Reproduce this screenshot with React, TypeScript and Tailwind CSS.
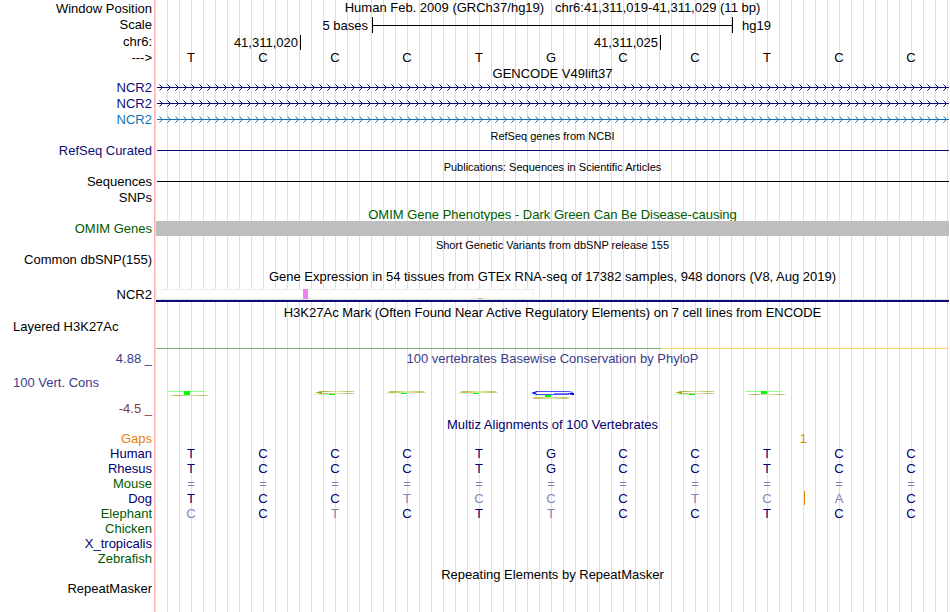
import type { ReactNode } from 'react'
import clsx from 'clsx'

const BASES = 'TCCCTGCCTCC'

// upper case = match with the reference genome, lower case = drawn faded
const SPECIES = [
  { name: 'Human', color: 'text-[#00006e]', seq: 'TCCCTGCCTCC' },
  { name: 'Rhesus', color: 'text-[#00006e]', seq: 'TCCCTGCCTCC' },
  { name: 'Mouse', color: 'text-[#005a00]', seq: '===========' },
  { name: 'Dog', color: 'text-[#00006e]', seq: 'TCCtccCtcaC', insertAt: 9 },
  { name: 'Elephant', color: 'text-[#005a00]', seq: 'cCtCTtCCTCC' },
  { name: 'Chicken', color: 'text-[#005a00]', seq: '' },
  { name: 'X_tropicalis', color: 'text-[#00006e]', seq: '' },
  { name: 'Zebrafish', color: 'text-[#005a00]', seq: '' },
]

const GENES = [
  { id: 'ncr2-a', text: 'text-[#0c0c78]', stroke: '#0c0c78' },
  { id: 'ncr2-b', text: 'text-[#0c0c78]', stroke: '#0c0c78' },
  { id: 'ncr2-c', text: 'text-[#1173b3]', stroke: '#1173b3' },
]

type RowProps = {
  label?: string
  color?: string
  height: string
  left?: boolean
  className?: string
  children?: ReactNode
}

function Row({ label, color = 'text-black', height, left, className, children }: RowProps) {
  return (
    <div className={clsx('flex', height)}>
      <div
        className={clsx(
          'flex w-[155px] shrink-0 items-center border-r border-[#ffb4b4] bg-white leading-4 whitespace-nowrap',
          left ? 'justify-start pl-[13px]' : 'justify-end pr-[2px]',
          color,
        )}
      >
        {label}
      </div>
      <div className={clsx('flex min-w-0 flex-1 items-center pl-px', className)}>{children}</div>
    </div>
  )
}

type TitleProps = { small?: boolean; color?: string; children: ReactNode }

function Title({ small, color = 'text-black', children }: TitleProps) {
  return (
    <h2 className={clsx('w-full text-center whitespace-pre', small ? 'text-[11px] leading-4' : 'text-[13px] leading-4', color)}>
      {children}
    </h2>
  )
}

function Sequence({ seq, insertAt, plain }: { seq: string; insertAt?: number; plain?: boolean }) {
  return (
    <div className="grid h-full w-full grid-cols-11 items-center pr-[2px] text-center">
      {seq.split('').map((base, i) => (
        <span
          key={i}
          className={clsx(
            'relative',
            plain ? 'text-black' : base === base.toUpperCase() && base !== '=' ? 'text-[#00006e]' : 'text-[#8484b4]',
          )}
        >
          {i === insertAt && <i className="absolute top-0 -left-1 h-3.5 w-1.5 border-r border-[#e6820a]" />}
          {base.toUpperCase()}
        </span>
      ))}
    </div>
  )
}

function Intron({ id, stroke }: { id: string; stroke: string }) {
  return (
    <svg className="ml-px h-[15px] w-full" aria-hidden="true">
      <defs>
        <pattern id={id} width="8" height="15" patternUnits="userSpaceOnUse">
          <path d="M2.5 4.5 L5.5 7.5 L2.5 10.5" fill="none" stroke={stroke} strokeWidth="1" />
        </pattern>
      </defs>
      <rect width="100%" height="15" fill={`url(#${id})`} />
      <rect y="7" width="100%" height="1" fill={stroke} />
    </svg>
  )
}

// sequence logo squashed by near-zero conservation scores
function FlatT({ x, depth }: { x: number; depth: number }) {
  return (
    <g transform={`translate(${x} 0)`}>
      <rect x="0" y="3" width="37" height="1" fill="#8cff8c" />
      <rect x="3" y={3 + depth} width="38" height="1" fill="url(#olive)" />
      <rect x="16" y="3" width="6" height={depth} fill="#00ff00" />
    </g>
  )
}

function FlatC({ x, open }: { x: number; open?: boolean }) {
  return (
    <g transform={`translate(${x} 0)`}>
      {open ? (
        <>
          <rect x="-2" y="6" width="18" height="1" fill="#c8ffc8" />
          <rect x="4" y="3" width="36" height="1" fill="url(#olive)" />
          <rect x="4" y="5" width="36" height="1" fill="url(#olive)" />
          <path d="M0 4.5 L7 3 L7 6 Z" fill="#a0a000" />
          <rect x="14" y="6" width="6" height="1" fill="#00ff00" />
        </>
      ) : (
        <>
          <rect x="-2" y="5" width="18" height="1" fill="#dcffdc" />
          <path d="M0 4 L4 3 H36 L40 4.5 L36 5 H2 Z" fill="url(#pale)" />
          <rect x="14" y="5" width="6" height="1" fill="#00ff00" />
        </>
      )}
    </g>
  )
}

function FlatG({ x }: { x: number }) {
  return (
    <g transform={`translate(${x} 0)`}>
      <path d="M5 3.5 H38 L42 4.5" fill="none" stroke="#5050ff" />
      <path d="M5 6.5 H38" fill="none" stroke="#5050ff" />
      <path d="M0 5 L6 3 V4 L4 5 L6 6 V7 Z" fill="#0000ff" />
      <path d="M23 5.5 H42" fill="none" stroke="#7878ff" />
      <path d="M37 5 H43 V7 H40 Z" fill="#0000ff" />
      <rect x="1" y="7" width="14" height="1" fill="#c8ffc8" />
      <rect x="14" y="7" width="6" height="2" fill="#00ff00" />
      <path d="M0 10 L4 9 H36 L40 10 L36 11 H4 Z" fill="url(#pale)" />
    </g>
  )
}

function ConservationLogo() {
  return (
    <svg className="h-3 w-full" role="img" aria-label="100 vertebrates conservation">
      <defs>
        <linearGradient id="olive">
          <stop offset="0" stopColor="#a0a000" stopOpacity="0.3" />
          <stop offset="0.15" stopColor="#a09614" stopOpacity="0.8" />
          <stop offset="0.5" stopColor="#c8c878" stopOpacity="0.5" />
          <stop offset="0.85" stopColor="#a09614" stopOpacity="0.7" />
          <stop offset="1" stopColor="#a0a000" stopOpacity="0.2" />
        </linearGradient>
        <linearGradient id="pale">
          <stop offset="0" stopColor="#b4b43c" stopOpacity="0.5" />
          <stop offset="0.12" stopColor="#b4b43c" stopOpacity="0.9" />
          <stop offset="0.5" stopColor="#dcdca0" stopOpacity="0.8" />
          <stop offset="0.88" stopColor="#b4b43c" stopOpacity="0.8" />
          <stop offset="1" stopColor="#b4b43c" stopOpacity="0.3" />
        </linearGradient>
      </defs>
      <FlatT x={12} depth={4} />
      <FlatC x={159} open />
      <FlatC x={231} />
      <FlatC x={303} />
      <FlatG x={375} />
      <FlatC x={519} open />
      <FlatT x={589} depth={3} />
    </svg>
  )
}

export default function App() {
  return (
    <main className="flex min-h-screen flex-col bg-white pr-px font-['Liberation_Sans',Arial,sans-serif] text-[13px] leading-[15px] text-black">
      <div className="flex flex-1 flex-col overflow-hidden bg-[repeating-linear-gradient(to_right,transparent_0_11px,#dcdcf8_11px_12px)]">
        <Row label="Window Position" height="h-[17px]" className="items-start!">
          <Title>{'Human Feb. 2009 (GRCh37/hg19)   chr6:41,311,019-41,311,029 (11 bp)'}</Title>
        </Row>
        <Row label="Scale" height="h-4">
          <span className="w-[212px] text-right">5 bases</span>
          <span className="ml-1 flex h-4 w-[361px] items-center border-x border-black">
            <i className="h-px w-full bg-black" />
          </span>
          <span className="ml-[9px]">hg19</span>
        </Row>
        <Row label="chr6:" height="h-[17px]" className="pt-[2px]">
          <span className="w-[145px] border-r border-black pr-[2px] text-right">41,311,020</span>
          <span className="w-[360px] border-r border-black pr-[2px] text-right">41,311,025</span>
        </Row>
        <Row label="--->" height="h-4" className="pb-[4px] pl-0!">
          <Sequence seq={BASES} plain />
        </Row>

        <Row height="h-3.5" className="pt-[2px]">
          <Title>GENCODE V49lift37</Title>
        </Row>
        {GENES.map((g) => (
          <Row key={g.id} label="NCR2" color={g.text} height="h-4" className="items-start!">
            <Intron id={g.id} stroke={g.stroke} />
          </Row>
        ))}

        <Row height="h-[15px]">
          <Title small>RefSeq genes from NCBI</Title>
        </Row>
        <Row label="RefSeq Curated" color="text-[#0c0c78]" height="h-[15px]">
          <i className="ml-px h-px w-full bg-[#0c0c78]" />
        </Row>

        <Row height="h-4" className="pt-[2px]">
          <Title small>Publications: Sequences in Scientific Articles</Title>
        </Row>
        <Row label="Sequences" height="h-[15px]">
          <i className="ml-px h-px w-full bg-black" />
        </Row>
        <Row label="SNPs" height="h-[17px]" />

        <Row height="h-[15px]" className="pt-[2px]">
          <Title color="text-[#005a00]">OMIM Gene Phenotypes - Dark Green Can Be Disease-causing</Title>
        </Row>
        <Row label="OMIM Genes" color="text-[#005a00]" height="h-[15px]">
          <i className="h-full w-full bg-[#bebebe]" />
        </Row>

        <Row height="h-[17px]">
          <Title small>Short Genetic Variants from dbSNP release 155</Title>
        </Row>
        <Row label="Common dbSNP(155)" height="h-3.5" />

        <Row height="h-[19px]">
          <Title>Gene Expression in 54 tissues from GTEx RNA-seq of 17382 samples, 948 donors (V8, Aug 2019)</Title>
        </Row>
        <Row label="NCR2" height="h-[17px]" className="flex-col items-stretch! pt-[3px]">
          <div className="flex h-2.5 w-[378px] items-end border border-[#f0f0f0] bg-white pl-[146px]">
            <i className="-my-px h-2.5 w-[5px] bg-[#ee82ee]" />
            <i className="-mb-px ml-[170px] h-px w-[5px] bg-[#cdb79e]" />
          </div>
          <i className="h-px bg-[#e6e6e6]" />
          <i className="h-0.5 bg-[#0c0c78]" />
        </Row>

        <Row height="h-[17px]" className="pt-[2px]">
          <Title>H3K27Ac Mark (Often Found Near Active Regulatory Elements) on 7 cell lines from ENCODE</Title>
        </Row>
        <Row label="Layered H3K27Ac" left height="h-3.5" />
        <Row height="h-[17px]" className="items-end! pb-[2px]">
          <i className="h-px w-[505px] bg-[#78b478]" />
          <i className="h-px flex-1 bg-[#ffd278]" />
        </Row>

        <Row label="4.88 _" color="text-[#3c3c8c]" height="h-[15px]">
          <Title color="text-[#3c3c8c]">100 vertebrates Basewise Conservation by PhyloP</Title>
        </Row>
        <Row label="100 Vert. Cons" color="text-[#3c3c8c]" left height="h-[34px]" className="items-end!">
          <ConservationLogo />
        </Row>
        <Row label="-4.5 _" color="text-[#823c3c]" height="h-[17px]" />

        <Row height="h-3.5" className="pt-[2px]">
          <Title color="text-[#00006e]">Multiz Alignments of 100 Vertebrates</Title>
        </Row>
        <Row label="Gaps" color="text-[#e6820a]" height="h-[15px]" className="pl-0!">
          <div className="grid w-full grid-cols-11 pr-[2px]">
            <span className="relative col-start-10 h-[15px]">
              <span className="absolute top-0 -left-1 flex w-2 justify-end text-[#e6820a]">1</span>
            </span>
          </div>
        </Row>
        {SPECIES.map((s) => (
          <Row key={s.name} label={s.name} color={s.color} height="h-[15px]" className="pl-0!">
            <Sequence seq={s.seq} insertAt={s.insertAt} />
          </Row>
        ))}

        <Row height="h-4" className="pt-[2px]">
          <Title>Repeating Elements by RepeatMasker</Title>
        </Row>
        <Row label="RepeatMasker" height="h-3.5" />
        <Row height="flex-1" />
      </div>
    </main>
  )
}
